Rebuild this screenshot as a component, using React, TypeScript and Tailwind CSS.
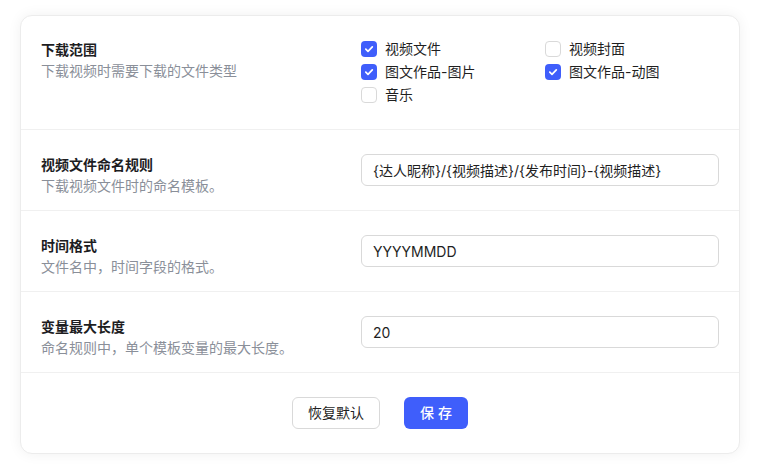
import React, { useState } from 'react';

type Option = { key: string; label: string };

const OPTIONS: Option[] = [
  { key: 'video', label: '视频文件' },
  { key: 'cover', label: '视频封面' },
  { key: 'image', label: '图文作品-图片' },
  { key: 'gif', label: '图文作品-动图' },
  { key: 'music', label: '音乐' },
];

const Checkbox: React.FC<{ checked: boolean; label: string; onChange: () => void }> = ({ checked, label, onChange }) => (
  <label className="flex items-center h-5 gap-2 cursor-pointer select-none" onClick={onChange}>
    {checked ? (
      <span className="w-4 h-4 rounded-[4px] bg-[#3f5efb] flex items-center justify-center">
        <svg width="10" height="10" viewBox="0 0 10 10" fill="none">
          <path d="M1.8 5.2 4 7.3 8.3 2.8" stroke="white" strokeWidth="1.7" strokeLinecap="round" strokeLinejoin="round" />
        </svg>
      </span>
    ) : (
      <span className="w-4 h-4 rounded-[4px] border border-[#d9d9d9] bg-white" />
    )}
    <span className="text-sm text-[#1f1f1f]">{label}</span>
  </label>
);

const Row: React.FC<{ title: string; desc: string; children: React.ReactNode; first?: boolean }> = ({ title, desc, children, first }) => (
  <div className={`flex items-start px-5 pb-6 border-b border-[#f0f0f0] ${first ? 'pt-[23px]' : 'pt-6'}`}>
    {/* text block may run past the 32px input into the bottom padding */}
    <div className={`w-[320px] shrink-0 ${first ? '' : 'h-8'}`}>
      <div className="text-sm font-semibold leading-[22px] text-[#1d1d1f]">{title}</div>
      <div className="text-sm leading-5 text-[#8a8f99]">{desc}</div>
    </div>
    <div className="flex-1">{children}</div>
  </div>
);

const TextInput: React.FC<{ value: string; onChange: (v: string) => void }> = ({ value, onChange }) => (
  <input
    value={value}
    onChange={(e) => onChange(e.target.value)}
    className="block w-full h-8 px-[11px] rounded-md border border-[#d9d9d9] bg-white text-sm text-[#1f1f1f] outline-none"
  />
);

const App: React.FC = () => {
  const [checked, setChecked] = useState<Record<string, boolean>>({
    video: true,
    cover: false,
    image: true,
    gif: true,
    music: false,
  });
  const [template, setTemplate] = useState('{达人昵称}/{视频描述}/{发布时间}-{视频描述}');
  const [timeFormat, setTimeFormat] = useState('YYYYMMDD');
  const [maxLen, setMaxLen] = useState('20');

  const toggle = (key: string) => setChecked((c) => ({ ...c, [key]: !c[key] }));

  return (
    <div className="min-h-[470px] bg-white px-5 pt-[15px] font-['Inter','Noto_Sans_CJK_SC',sans-serif]">
      <div className="w-[720px] rounded-xl border border-[#ececec] bg-white shadow-[0_0_14px_rgba(0,0,0,0.06)]">
        <Row first title="下载范围" desc="下载视频时需要下载的文件类型">
          <div className="grid grid-cols-[184px_1fr] gap-y-[3px]">
            {OPTIONS.map((o) => (
              <Checkbox key={o.key} checked={checked[o.key]} label={o.label} onChange={() => toggle(o.key)} />
            ))}
          </div>
        </Row>
        <Row title="视频文件命名规则" desc="下载视频文件时的命名模板。">
          <TextInput value={template} onChange={setTemplate} />
        </Row>
        <Row title="时间格式" desc="文件名中，时间字段的格式。">
          <TextInput value={timeFormat} onChange={setTimeFormat} />
        </Row>
        <Row title="变量最大长度" desc="命名规则中，单个模板变量的最大长度。">
          <TextInput value={maxLen} onChange={setMaxLen} />
        </Row>
        <div className="flex justify-center gap-6 py-6">
          <button className="h-8 w-[88px] rounded-md border border-[#d9d9d9] bg-white text-sm text-[#1f1f1f]">
            恢复默认
          </button>
          <button className="h-8 w-16 rounded-md bg-[#3f5efb] text-sm font-medium text-white tracking-[4px] pl-1">
            保存
          </button>
        </div>
      </div>
    </div>
  );
};

export default App;
